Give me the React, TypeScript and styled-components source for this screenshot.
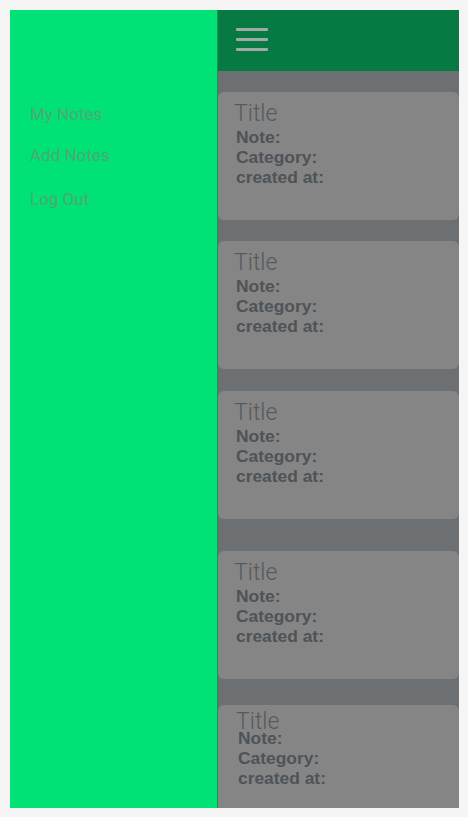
import React from "react";
import styled, { createGlobalStyle } from "styled-components";

const Global = createGlobalStyle`
  html, body { margin: 0; padding: 0; background: #f5f5f5; }
  body { font-family: Roboto, "Liberation Sans", sans-serif; }
  * { box-sizing: border-box; }
`;

const Frame = styled.div`
  margin: 10px 0 0 10px;
  width: 449px;
  height: 798px;
  display: flex;
  overflow: hidden;
`;

const Sidebar = styled.nav`
  width: 208px;
  flex: 0 0 208px;
  background: #00e276;
  border-right: 1px solid #0b9c52;
  display: flex;
  flex-direction: column;
  padding: 94px 0 0 20px;
`;

const NavLink = styled.a<{ $gap: number }>`
  font-family: Roboto, "Liberation Sans", sans-serif;
  font-size: 17px;
  line-height: 20px;
  color: #4ea873;
  text-decoration: none;
  margin-top: ${(p) => p.$gap}px;
`;

const Main = styled.main`
  flex: 1;
  display: flex;
  flex-direction: column;
  min-width: 0;
`;

const Header = styled.header`
  height: 61px;
  flex: 0 0 61px;
  background: #077a43;
  display: flex;
  align-items: flex-start;
  padding: 18px 0 0 18px;
`;

const Burger = styled.div`
  width: 32px;
  display: flex;
  flex-direction: column;
  gap: 7px;
`;

const Bar = styled.span`
  display: block;
  height: 3px;
  background: #a2aaa5;
  border-radius: 1px;
`;

const Content = styled.section`
  flex: 1;
  background: #6d7073;
  display: flex;
  flex-direction: column;
  overflow: hidden;
`;

const Card = styled.article<{ $gap: number; $compact?: boolean }>`
  flex: 0 0 128px;
  height: 128px;
  margin-top: ${(p) => p.$gap}px;
  background: #858585;
  border-radius: 6px;
  padding: ${(p) => (p.$compact ? "9px 0 0 18px" : "10px 0 0 16px")};
`;

const Title = styled.h2<{ $compact?: boolean }>`
  margin: 0;
  font-family: Roboto, "Liberation Sans", sans-serif;
  font-weight: 300;
  font-size: 23px;
  line-height: ${(p) => (p.$compact ? "16px" : "24px")};
  color: #555a5f;
`;

const Details = styled.div<{ $compact?: boolean }>`
  margin-top: ${(p) => (p.$compact ? "-2px" : "1px")};
  padding-left: 2px;
  display: flex;
  flex-direction: column;
`;

const Field = styled.span`
  font-family: "Liberation Sans", Arial, sans-serif;
  font-weight: 700;
  font-size: 17.4px;
  line-height: 20px;
  color: #4e5358;
`;

const navItems = [
  { label: "My Notes", gap: 0 },
  { label: "Add Notes", gap: 21 },
  { label: "Log Out", gap: 24 },
];

const cards = [
  { gap: 21 },
  { gap: 21 },
  { gap: 22 },
  { gap: 32 },
  { gap: 26, compact: true },
];

export default function App() {
  return (
    <>
      <Global />
      <Frame>
        <Sidebar>
          {navItems.map((n) => (
            <NavLink key={n.label} href="#" $gap={n.gap}>
              {n.label}
            </NavLink>
          ))}
        </Sidebar>
        <Main>
          <Header>
            <Burger>
              <Bar />
              <Bar />
              <Bar />
            </Burger>
          </Header>
          <Content>
            {cards.map((c, i) => (
              <Card key={i} $gap={c.gap} $compact={c.compact}>
                <Title $compact={c.compact}>Title</Title>
                <Details $compact={c.compact}>
                  <Field>Note:</Field>
                  <Field>Category:</Field>
                  <Field>created at:</Field>
                </Details>
              </Card>
            ))}
          </Content>
        </Main>
      </Frame>
    </>
  );
}
